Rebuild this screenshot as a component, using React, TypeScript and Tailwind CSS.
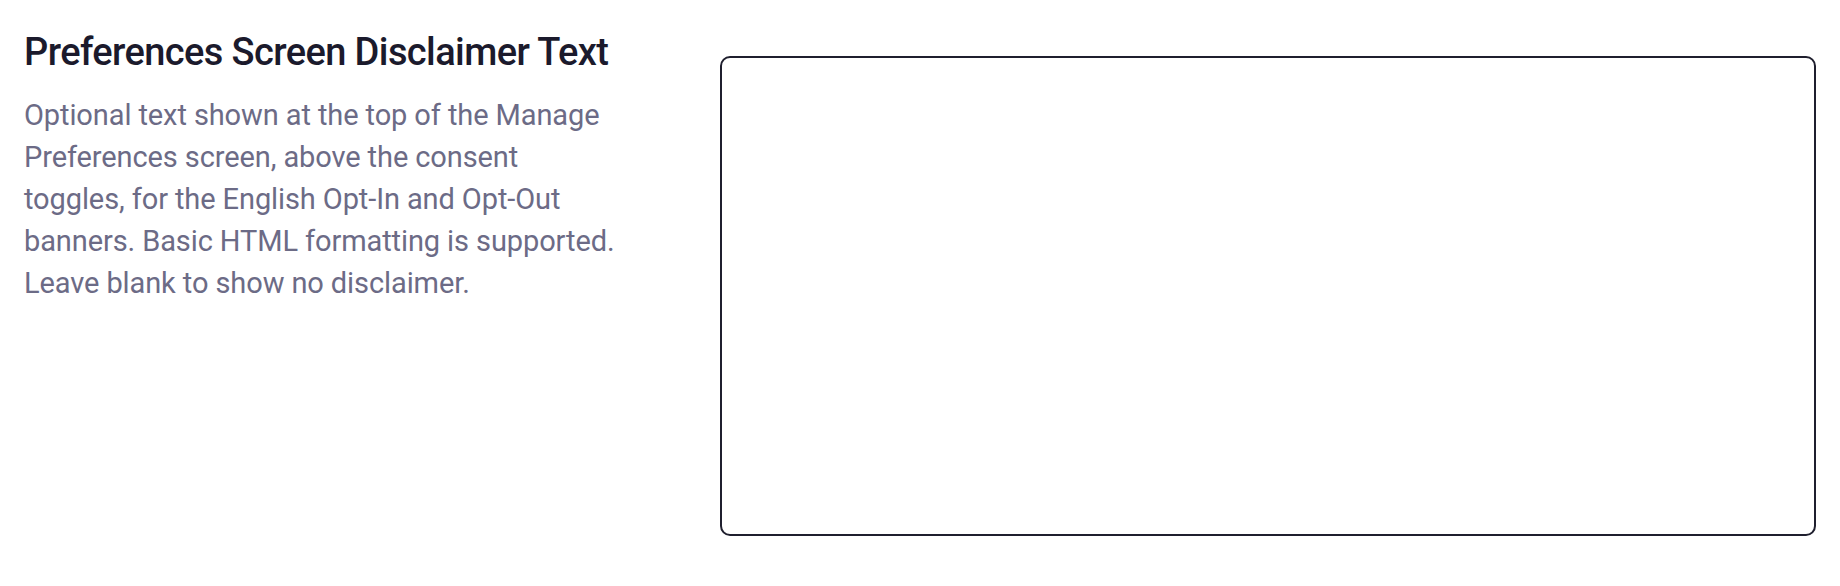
import React from 'react';

export default function App() {
  return (
    <div className="min-h-screen bg-white font-['Roboto',_'Liberation_Sans',_sans-serif]">
      <div className="flex items-start gap-[76px] px-6 pt-[30px]">
        <div className="w-[620px] shrink-0">
          <h2 className="text-[38px] leading-[44px] font-medium tracking-[-0.6px] text-[#1b1a2c]">
            Preferences Screen Disclaimer Text
          </h2>
          <p className="mt-[20px] text-[29px] leading-[42px] tracking-[-0.1px] text-[#6c6b86]">
            Optional text shown at the top of the Manage
            <br />
            Preferences screen, above the consent
            <br />
            toggles, for the English Opt-In and Opt-Out
            <br />
            banners. Basic HTML formatting is supported.
            <br />
            Leave blank to show no disclaimer.
          </p>
        </div>
        <textarea
          className="mt-[26px] h-[480px] flex-1 resize-none rounded-[10px] border-2 border-[#1f1f2e] bg-white p-4 text-[28px] outline-none"
          defaultValue=""
        />
      </div>
    </div>
  );
}
